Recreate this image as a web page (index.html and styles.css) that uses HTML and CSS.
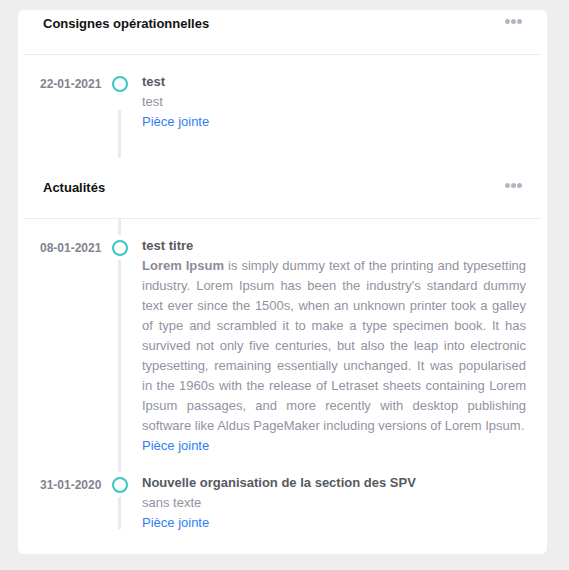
FILE: index.html
```html
<!DOCTYPE html>
<html>
  <head>
    <title>Consignes et actualités</title>
    <link rel="stylesheet" href="styles.css">
  </head>
  <body>
    <div class="card">
      <section class="block">
        <div class="block-head">
          <h3>Consignes opérationnelles</h3>
          <span class="dots"><i></i><i></i><i></i></span>
        </div>
        <ul class="timeline timeline-first">
          <li class="entry">
            <span class="entry-date">22-01-2021</span>
            <span class="entry-mark"><span class="ring"></span></span>
            <div class="entry-body">
              <div class="entry-title">test</div>
              <p>test</p>
              <a href="#">Pièce jointe</a>
            </div>
          </li>
        </ul>
      </section>

      <section class="block">
        <div class="block-head">
          <h3>Actualités</h3>
          <span class="dots"><i></i><i></i><i></i></span>
        </div>
        <ul class="timeline timeline-last">
          <li class="entry">
            <span class="entry-date">08-01-2021</span>
            <span class="entry-mark"><span class="ring"></span></span>
            <div class="entry-body">
              <div class="entry-title">test titre</div>
              <p><b>Lorem Ipsum</b> is simply dummy text of the printing and typesetting industry. Lorem Ipsum has been the industry's standard dummy text ever since the 1500s, when an unknown printer took a galley of type and scrambled it to make a type specimen book. It has survived not only five centuries, but also the leap into electronic typesetting, remaining essentially unchanged. It was popularised in the 1960s with the release of Letraset sheets containing Lorem Ipsum passages, and more recently with desktop publishing software like Aldus PageMaker including versions of Lorem Ipsum.</p>
              <a href="#">Pièce jointe</a>
            </div>
          </li>
          <li class="entry">
            <span class="entry-date">31-01-2020</span>
            <span class="entry-mark"><span class="ring"></span></span>
            <div class="entry-body">
              <div class="entry-title">Nouvelle organisation de la section des SPV</div>
              <p>sans texte</p>
              <a href="#">Pièce jointe</a>
            </div>
          </li>
        </ul>
      </section>
    </div>
  </body>
</html>
```

FILE: styles.css
```css
* {
  box-sizing: border-box;
}

body {
  margin: 0;
  padding: 10px 22px 16px 18px;
  background: #eeeeee;
  font-family: "Liberation Sans", Arial, sans-serif;
}

.card {
  background: #fff;
  border-radius: 6px;
  padding: 0 5px;
}

.block-head {
  display: flex;
  justify-content: space-between;
  align-items: flex-start;
  padding: 4px 20px 20px;
  border-bottom: 1px solid #ebedf2;
}

.block-head h3 {
  margin: 0;
  font-size: 13px;
  line-height: 20px;
  font-weight: bold;
  color: #111;
}

.dots {
  display: flex;
  gap: 1px;
  margin-top: 5px;
}

.dots i {
  width: 5px;
  height: 5px;
  border-radius: 50%;
  background: #b3b5c5;
}

/* timeline */
.timeline {
  position: relative;
  list-style: none;
  margin: 0;
  padding: 16px 0 42px;
}

.timeline::before {
  content: "";
  position: absolute;
  left: 95px;
  width: 3px;
  top: 0;
  bottom: 25px;
  background: #e9e9f1;
}

.timeline-first::before {
  top: 55px;
  bottom: 16px;
}

.timeline-last {
  padding-bottom: 21px;
}

.entry {
  display: flex;
  align-items: flex-start;
  padding: 0 16px 0 17px;
}

.entry + .entry {
  margin-top: 16px;
}

.entry-date {
  flex-shrink: 0;
  width: 61px;
  margin: 5px 11px 0 0;
  font-size: 12px;
  line-height: 16px;
  font-weight: bold;
  color: #82848f;
  white-space: nowrap;
}

.entry-mark {
  position: relative;
  z-index: 1;
  flex-shrink: 0;
  width: 16px;
  padding: 5px 0 4px;
  margin-right: 14px;
  background: #fff;
}

.ring {
  display: block;
  width: 16px;
  height: 16px;
  border: 2px solid #3cc5bf;
  border-radius: 50%;
}

.entry-body {
  flex: 1;
  padding-top: 1px;
  font-size: 13px;
  line-height: 20px;
  color: #9192a2;
}

.entry-title {
  font-weight: bold;
  color: #575962;
}

.entry-body p {
  margin: 0;
  text-align: justify;
}

.entry-body b {
  color: #8a8c9b;
}

.entry-body a {
  color: #2f7ef6;
  text-decoration: none;
}
```
